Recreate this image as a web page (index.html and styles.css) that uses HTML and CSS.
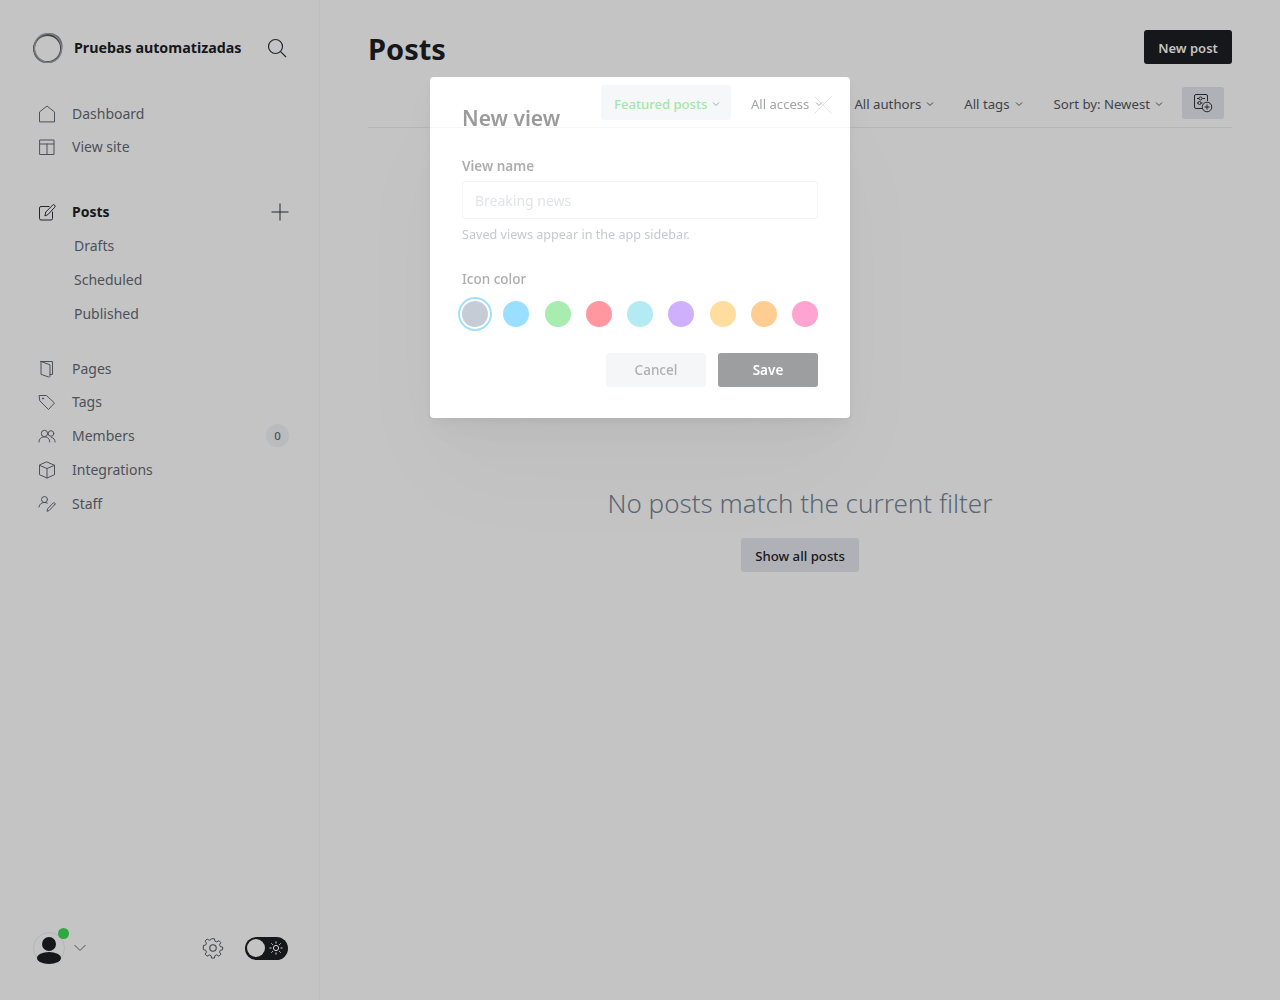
FILE: index.html
```html
<!DOCTYPE html>
<html lang="en">
<head>
<meta charset="utf-8">
<title>Posts</title>
<link rel="stylesheet" href="styles.css">
</head>
<body>
<div class="app">
  <aside class="sidebar">
    <header class="brand">
      <svg class="logo" width="32" height="32" viewBox="0 0 32 32" fill="none"><circle cx="15.500" cy="16.500" r="13.500" stroke="#3e4044" stroke-width="1.800"/><ellipse cx="16" cy="16" rx="13.400" ry="14.800" stroke="#65676b" stroke-width="1.400" transform="rotate(35 16 16)"/><ellipse cx="16" cy="16" rx="14.600" ry="13.400" stroke="#7d7f82" stroke-width="1.200" transform="rotate(70 16 16)"/></svg>
      <span class="brand-name">Pruebas automatizadas</span>
      <svg class="search" width="20" height="20" viewBox="0 0 20 20" fill="none" stroke="#23262b" stroke-width="1.200"><circle cx="8.500" cy="8.500" r="7"/><path d="M13.600 13.600 19 19"/></svg>
    </header>
    <nav class="nav">
      <a class="row short"><svg class="ic" viewBox="0 0 18 18"><path d="M1.500 16.500V7L9 1l7.500 6v9.500z"/></svg>Dashboard</a>
      <a class="row"><svg class="ic" viewBox="0 0 18 18"><path d="M2 2h14v14.500H2zM2 6h14M9 6v10.500"/></svg>View site</a>
    </nav>
    <nav class="nav">
      <a class="row strong"><svg class="ic" viewBox="0 0 18 18"><path d="M11 3.500H3a1.500 1.500 0 0 0-1.500 1.500v10.500A1.500 1.500 0 0 0 3 17h10a1.500 1.500 0 0 0 1.500-1.500V9"/><path d="M7 12.500l.8-3.500L14.500 2.200a1.500 1.500 0 0 1 2.200 2.100L10 11.500z"/></svg>Posts<svg class="plus" width="18" height="18" viewBox="0 0 18 18"><path d="M9 .5v17M.5 9h17"/></svg></a>
      <a class="row sub">Drafts</a>
      <a class="row sub">Scheduled</a>
      <a class="row sub">Published</a>
    </nav>
    <nav class="nav">
      <a class="row short"><svg class="ic" viewBox="0 0 18 18"><path d="M3 1.500h11.500v13H13M3 1.500v12.800l7.500 2.700c.8.200 1.500-.2 1.500-1V4.800L3 1.500zM12 14.500h1"/></svg>Pages</a>
      <a class="row"><svg class="ic" viewBox="0 0 18 18"><path d="M1.500 2.500h7l8 7.500-6 6.500-8.500-8.500z"/><circle cx="5" cy="5.500" r=".6"/></svg>Tags</a>
      <a class="row members"><svg class="ic" viewBox="0 0 18 18"><circle cx="6.500" cy="6.500" r="3.200"/><path d="M1 15c0-3.500 2.300-5 5.500-5s5.200 1.500 5.200 5"/><circle cx="13" cy="6.500" r="2.800"/><path d="M13.500 10.500c2.200.3 3.500 1.800 3.500 4.500"/></svg>Members<span class="badge">0</span></a>
      <a class="row"><svg class="ic" viewBox="0 0 18 18"><path d="M9 1l7.500 3.300v9.400L9 17l-7.500-3.300V4.300zM1.500 4.300 9 7.500l7.500-3.200M9 7.500V17"/></svg>Integrations</a>
      <a class="row"><svg class="ic" viewBox="0 0 18 18"><circle cx="6.500" cy="4.500" r="3"/><path d="M1 12c.5-3 2.500-4.500 5.500-4.500 1 0 2 .2 2.800.6M16.800 9.500l-5.600 6-2.200.8.500-2.300 5.600-6c.5-.5 1.200-.4 1.700 0s.5 1.100 0 1.500z"/></svg>Staff</a>
    </nav>
    <footer class="side-foot">
      <div class="avatar">
        <svg width="32" height="32" viewBox="0 0 32 32"><circle cx="16" cy="16" r="15.500" fill="none" stroke="#b4b5b7"/><circle cx="16" cy="12" r="7" fill="#15171a"/><ellipse cx="16" cy="26" rx="12" ry="6" fill="#15171a"/></svg>
        <span class="dot"></span>
      </div>
      <svg class="chev-user" width="12" height="8" viewBox="0 0 12 8" fill="none" stroke="#4b5058"><path d="M.5 1 6 6.500 11.500 1"/></svg>
      <svg class="gear" width="22" height="22" viewBox="0 0 24 24" fill="none" stroke="#3f444b" stroke-width="1.200" stroke-linejoin="round"><circle cx="12" cy="12" r="3.500"/><path d="M10.200 2h3.600l.6 3 2.300 1 2.600-1.700 2.500 2.600-1.700 2.500 1 2.400 2.900.6v3.200l-2.900.6-1 2.400 1.700 2.500-2.500 2.600-2.600-1.700-2.300 1-.6 3h-3.600l-.6-3-2.300-1-2.600 1.700-2.500-2.600 1.700-2.500-1-2.400-2.900-.6V10.400l2.900-.6 1-2.400-1.700-2.500 2.500-2.600 2.600 1.700 2.300-1z" transform="translate(12 12) scale(.88) translate(-12 -13.500)"/></svg>
      <div class="toggle">
        <span class="knob"></span>
        <svg width="14" height="14" viewBox="0 0 14 14" fill="none" stroke="#d9d9d9"><circle cx="7" cy="7" r="2.600"/><path d="M7 .5v2M7 11.500v2M.5 7h2M11.500 7h2M2.400 2.400 3.800 3.800M10.200 10.200l1.400 1.400M2.400 11.600l1.400-1.400M10.200 3.800l1.400-1.400"/></svg>
      </div>
    </footer>
  </aside>

  <main class="main">
    <div class="head">
      <h1 class="page-title">Posts</h1>
      <button class="btn-dark">New post</button>
    </div>
    <div class="filters">
      <span class="filter">All authors<svg class="chev" viewBox="0 0 8 6"><path d="M1 1.500 4 4.500 7 1.500"/></svg></span>
      <span class="filter">All tags<svg class="chev" viewBox="0 0 8 6"><path d="M1 1.500 4 4.500 7 1.500"/></svg></span>
      <span class="filter">Sort by: Newest<svg class="chev" viewBox="0 0 8 6"><path d="M1 1.500 4 4.500 7 1.500"/></svg></span>
      <span class="view-btn"><svg width="20" height="20" viewBox="0 0 20 20" fill="none" stroke="#23262b"><path d="M9 15.500H3a1.500 1.500 0 0 1-1.500-1.500V3A1.500 1.500 0 0 1 3 1.500h10A1.500 1.500 0 0 1 14.500 3v5"/><path d="M4 5.500h2M9.500 5.500h2.500M4 10h1M8 10h1.500"/><circle cx="7.500" cy="5.500" r="1.500"/><circle cx="6.500" cy="10" r="1.500"/><circle cx="14" cy="14" r="4.800"/><path d="M14 11.500v5M11.500 14h5"/></svg></span>
    </div>
    <section class="empty">
      <h2 class="empty-title">No posts match the current filter</h2>
      <button class="btn-grey">Show all posts</button>
    </section>
  </main>
</div>

<div class="modal" role="dialog">
  <div class="modal-head">
    <h3 class="modal-title">New view</h3>
    <div class="ghost-filters">
      <span class="ghost-pill">Featured posts<svg class="chev" viewBox="0 0 8 6"><path d="M1 1.500 4 4.500 7 1.500"/></svg></span>
      <span class="ghost-item">All access<svg class="chev" viewBox="0 0 8 6"><path d="M1 1.500 4 4.500 7 1.500"/></svg></span>
    </div>
    <svg class="close" width="18" height="18" viewBox="0 0 18 18" fill="none" stroke="#e3e3e3"><path d="M.5.500l17 17M17.500.500l-17 17"/></svg>
  </div>
  <div class="modal-body">
    <label class="label">View name</label>
    <div class="input">Breaking news</div>
    <p class="hint">Saved views appear in the app sidebar.</p>
    <label class="label label-color">Icon color</label>
    <div class="swatches">
      <span class="swatch sel c1"></span>
      <span class="swatch c2"></span>
      <span class="swatch c3"></span>
      <span class="swatch c4"></span>
      <span class="swatch c5"></span>
      <span class="swatch c6"></span>
      <span class="swatch c7"></span>
      <span class="swatch c8"></span>
      <span class="swatch c9"></span>
    </div>
    <div class="actions">
      <button class="btn-cancel">Cancel</button>
      <button class="btn-save">Save</button>
    </div>
  </div>
</div>
</body>
</html>
```
FILE: styles.css
```css
* { box-sizing: border-box; }
html, body { margin: 0; height: 100%; }
body {
  font-family: "Noto Sans", sans-serif;
  background: #c4c4c4;
  color: #15171a;
  overflow: hidden;
}
button { font-family: inherit; border: 0; cursor: pointer; }
h1, h2, h3, p { margin: 0; }

.app { display: flex; height: 1000px; }

.sidebar {
  width: 320px;
  flex: none;
  border-right: 1px solid #bcbdbe;
  display: flex;
  flex-direction: column;
  padding-top: 32px;
}
.brand { display: flex; align-items: center; height: 32px; padding-left: 32px; }
.logo { flex: none; }
.brand-name { margin-left: 10px; padding-bottom: 2px; font-size: 14.25px; font-weight: 700; }
.search { margin-left: 26px; }

.nav { display: flex; flex-direction: column; margin-bottom: 31px; }
.nav:first-of-type { margin-top: 33px; }
.nav:nth-of-type(2) { margin-bottom: 21px; }
.row {
  display: flex;
  align-items: center;
  height: 34px;
  padding-left: 38px;
  padding-right: 30px;
  padding-bottom: 1px;
  font-size: 14px;
  color: #4d5159;
}
.short { height: 33px; padding-bottom: 0; }
.ic {
  width: 18px;
  height: 18px;
  flex: none;
  margin-right: 16px;
  fill: none;
  stroke: #4d5159;
  stroke-width: 1;
  stroke-linejoin: round;
  stroke-linecap: round;
}
.strong { color: #15171a; font-weight: 700; }
.strong .ic { stroke: #23262b; }
.plus { margin-left: auto; fill: none; stroke: #23262b; stroke-width: 1; }
.sub { padding-left: 74px; }
.badge {
  margin-left: auto;
  width: 23px;
  height: 23px;
  border-radius: 50%;
  background: #b9bbbe;
  font-size: 11.500px;
  font-weight: 500;
  display: flex;
  align-items: center;
  justify-content: center;
}

.side-foot {
  margin-top: auto;
  height: 32px;
  margin-bottom: 36px;
  padding-left: 33px;
  display: flex;
  align-items: center;
}
.avatar { position: relative; width: 32px; height: 32px; flex: none; }
.dot {
  position: absolute;
  top: -4px;
  right: -4px;
  width: 11px;
  height: 11px;
  border-radius: 50%;
  background: #2ea83f;
}
.chev-user { margin-left: 9px; }
.gear { margin-left: 116px; }
.toggle {
  margin-left: 21px;
  width: 43px;
  height: 23px;
  border-radius: 12px;
  background: #15171a;
  display: flex;
  align-items: center;
  justify-content: space-between;
  padding: 0 5px 0 2px;
}
.knob { width: 18px; height: 18px; border-radius: 50%; background: #c4c4c4; }

.main { flex: 1; padding: 30px 48px 0; display: flex; flex-direction: column; }
.head { display: flex; justify-content: space-between; align-items: flex-start; height: 34px; }
.page-title { font-size: 29px; font-weight: 700; line-height: 38px; }
.btn-dark {
  width: 88px;
  height: 34px;
  padding-top: 2px;
  border-radius: 3px;
  background: #15171a;
  color: #c4c4c4;
  font-size: 13px;
  font-weight: 600;
}
.filters {
  margin-top: 23px;
  height: 41px;
  border-bottom: 1px solid #b4b5b6;
  display: flex;
  align-items: flex-start;
  justify-content: flex-end;
  padding-right: 8px;
  color: #3e434a;
  font-size: 13.2px;
}
.filter { display: flex; align-items: center; height: 34px; margin-right: 30px; white-space: nowrap; }
.filter:nth-child(2) { margin-right: 31px; }
.filter:nth-child(3) { margin-right: 19px; }
.chev { width: 8px; height: 6px; margin-left: 5px; fill: none; stroke: currentColor; stroke-width: 1; }
.view-btn {
  width: 42px;
  height: 32px;
  border-radius: 3px;
  background: #b0b1b6;
  display: flex;
  align-items: center;
  justify-content: center;
}

.empty { display: flex; flex-direction: column; align-items: center; margin-top: 357px; }
.empty-title { font-size: 26px; font-weight: 300; line-height: 36px; color: #5c6773; }
.btn-grey {
  margin-top: 17px;
  width: 118px;
  height: 34px;
  padding-top: 2px;
  border-radius: 3px;
  background: #b0b1b6;
  color: #15171a;
  font-size: 13.2px;
  font-weight: 500;
}

.modal {
  position: fixed;
  left: 430px;
  top: 77px;
  width: 420px;
  height: 341px;
  background: #fff;
  border-radius: 4px;
  box-shadow: 0 4px 8px rgba(0, 0, 0, .04), 0 16px 32px rgba(0, 0, 0, .03), 0 32px 64px rgba(0, 0, 0, .02), 0 60px 110px rgba(0, 0, 0, .025);
}
.modal-head {
  position: relative;
  height: 51px;
  border-bottom: 1px solid #f6f6f6;
  padding: 27px 0 0 32px;
}
.modal-title { font-size: 21px; font-weight: 600; line-height: 28px; color: #9b9b9b; }
.ghost-filters {
  position: absolute;
  left: 171px;
  top: 8px;
  display: flex;
  align-items: center;
  font-size: 13.1px;
  white-space: nowrap;
}
.ghost-pill {
  display: flex;
  align-items: center;
  width: 130px;
  height: 35px;
  padding: 2px 0 0 13px;
  border-radius: 3px;
  background: #f6f7f8;
  color: #9fe9a4;
  font-weight: 500;
}
.ghost-pill .chev { color: #a7a7a7; }
.ghost-item { display: flex; align-items: center; margin-left: 20px; padding-top: 2px; color: #a2a4a6; }
.ghost-item .chev { margin-left: 6px; }
.close { position: absolute; right: 18px; top: 19px; }
.modal-body { padding: 29px 32px 0; }
.label { display: block; font-size: 13.5px; font-weight: 600; line-height: 18px; color: #adadad; }
.input {
  margin-top: 6px;
  height: 38px;
  border: 1px solid #f3f4f5;
  border-radius: 3px;
  padding-left: 12px;
  display: flex;
  align-items: center;
  font-size: 14px;
  color: #e2e4e7;
}
.hint { margin-top: 8px; font-size: 12.6px; line-height: 15px; color: #c6c9cd; }
.label-color { margin-top: 28px; font-weight: 500; }
.swatches { margin-top: 13px; display: flex; justify-content: space-between; }
.swatch { width: 26px; height: 26px; border-radius: 50%; }
.sel { box-shadow: 0 0 0 2px #fff, 0 0 0 4px #a0e0ff; }
.c1 { background: #c6ccd6; }
.c2 { background: #9adfff; }
.c3 { background: #a8ecb0; }
.c4 { background: #ff97a0; }
.c5 { background: #b4eaf1; }
.c6 { background: #cfb0fd; }
.c7 { background: #ffdd9f; }
.c8 { background: #ffcd92; }
.c9 { background: #ffa4d0; }
.actions { margin-top: 26px; display: flex; justify-content: flex-end; gap: 12px; }
.btn-cancel, .btn-save { width: 100px; height: 34px; border-radius: 3px; font-size: 13.5px; }
.btn-cancel { background: #f5f6f7; color: #adafb1; font-weight: 500; }
.btn-save { background: #9d9ea0; color: #fff; font-weight: 600; }
```
